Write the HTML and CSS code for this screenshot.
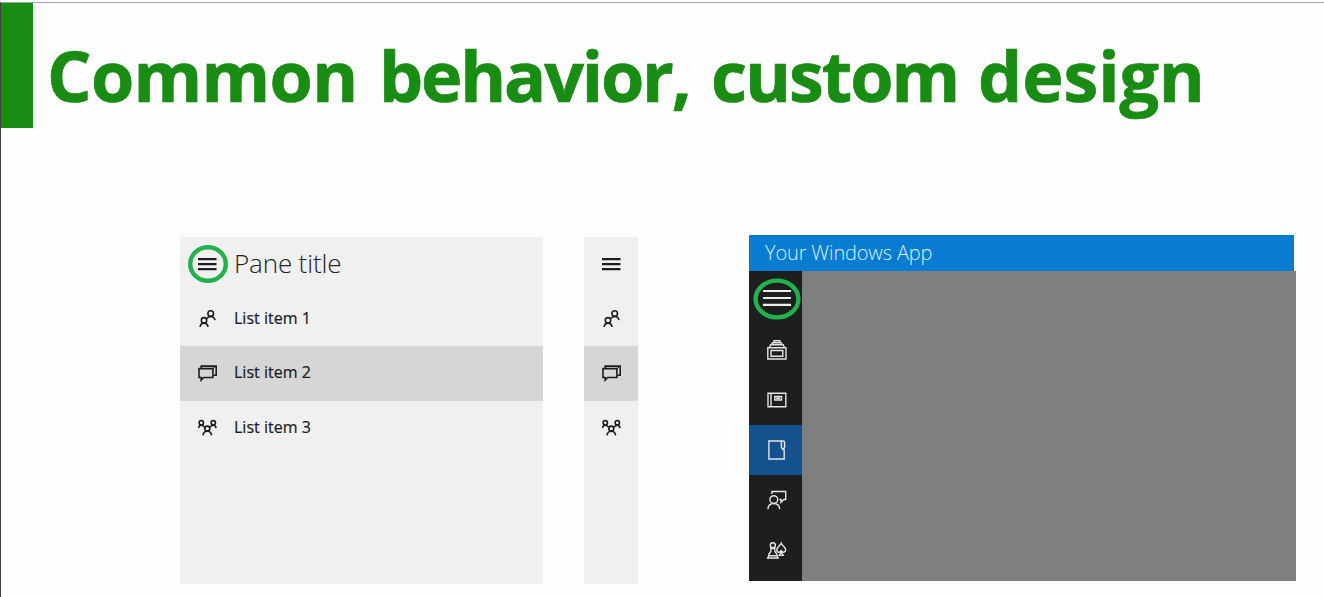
FILE: index.html
```html
<!DOCTYPE html>
<html lang="en">
<head>
<meta charset="utf-8">
<title>Common behavior, custom design</title>
<link rel="stylesheet" href="styles.css">
</head>
<body>
<svg class="defs" width="0" height="0" aria-hidden="true">
  <symbol id="menu" viewBox="0 0 20 20"><path d="M0 5.2H18.5M0 10.2H18.5M0 15.2H18.5" stroke-width="2.2"/></symbol>
  <symbol id="people" viewBox="0 0 20 20">
    <circle cx="12.7" cy="4.6" r="2.8"/><circle cx="6" cy="11.3" r="2.7"/>
    <path d="M2.1 18C2.4 15.4 4 14.1 6 14.1S9.7 15.4 10 18M8.7 9.6C9.5 8.2 11 7.5 12.7 7.5C15 7.5 16.6 8.9 17 11.2"/>
  </symbol>
  <symbol id="chat" viewBox="0 0 20 20">
    <path d="M1 5.6H14.9V14.5H5.6L3.2 17.1V14.5H1Z"/><path d="M3.2 5V3.1H18.2V12.2H15.4"/><path d="M14.9 5.6L18.2 3.1" stroke-width="1"/>
  </symbol>
  <symbol id="group" viewBox="0 0 20 20">
    <circle cx="3.3" cy="4.8" r="2.2"/><circle cx="15.3" cy="4.8" r="2.2"/><circle cx="9.3" cy="10.6" r="2.5"/>
    <path d="M.5 10.1C.7 8.4 1.6 7.2 3.3 7.2C4.8 7.2 6 8 6.7 9.3M18.1 10.1C17.9 8.4 17 7.2 15.3 7.2C13.8 7.2 12.6 8 11.9 9.3M5 17.4C5.3 14.7 7.1 13.3 9.3 13.3S13.3 14.7 13.6 17.4"/>
  </symbol>
</svg>
<main class="slide">
  <header class="heading">
    <div class="accent"></div>
    <h1 class="title"><span class="w1">Common</span> <span class="w2">behavior,</span> <span class="w3">custom</span> <span class="w4">design</span></h1>
  </header>
  <div class="demos">
    <section class="pane">
      <div class="row"><span class="cell"><svg class="icon"><use href="#menu"/></svg><svg class="ring" width="40" height="38"><ellipse cx="20" cy="19" rx="17.8" ry="16.8"/></svg></span><span class="pane-title">Pane title</span></div>
      <div class="row"><span class="cell"><svg class="icon"><use href="#people"/></svg></span><span class="label">List item 1</span></div>
      <div class="row selected"><span class="cell"><svg class="icon"><use href="#chat"/></svg></span><span class="label">List item 2</span></div>
      <div class="row"><span class="cell"><svg class="icon"><use href="#group"/></svg></span><span class="label">List item 3</span></div>
    </section>
    <section class="pane compact">
      <div class="row"><span class="cell"><svg class="icon"><use href="#menu"/></svg></span></div>
      <div class="row"><span class="cell"><svg class="icon"><use href="#people"/></svg></span></div>
      <div class="row selected"><span class="cell"><svg class="icon"><use href="#chat"/></svg></span></div>
      <div class="row"><span class="cell"><svg class="icon"><use href="#group"/></svg></span></div>
    </section>
    <section class="app">
      <div class="app-bar"><span class="app-name">Your Windows App</span></div>
      <div class="app-body">
        <nav class="rail">
          <div class="nav first"><svg class="burger" width="28" height="20"><path d="M0 3H28M0 10H28M0 16.8H28"/></svg><svg class="ring app-ring" width="48" height="42"><ellipse cx="24" cy="21" rx="21.4" ry="18.4"/></svg></div>
          <div class="nav"><svg class="glyph" viewBox="0 0 22 22"><path d="M1.8 8.8H20V20H1.8ZM5 11.5H16.8V17.2H5ZM3.4 8.5L4.6 5.8H17.2L18.4 8.5M5.7 5.4L6.6 3.8H15.2L16.1 5.4M8 3.2V1.8H13.8V3.2"/></svg></div>
          <div class="nav"><svg class="glyph" viewBox="0 0 22 22"><path d="M2 4.3H19.8V17.8H2ZM5 4.3V17.8M8.8 7.5H15.5V11H8.8ZM10.3 9.2H14"/></svg></div>
          <div class="nav current"><svg class="glyph" viewBox="0 0 22 22"><path d="M15.4 2H2.9V20H18.2V10.2M15.4 2H17.2C18.2 2 18.6 2.6 18.6 3.5V8.4L17 10.4L15.4 8.4Z"/></svg></div>
          <div class="nav"><svg class="glyph" viewBox="0 0 22 22"><circle cx="7.8" cy="10.6" r="3.9"/><path d="M1.9 20.2C2.2 16.6 4.3 14.5 7.8 14.5S13.4 16.6 13.7 20.2M5.9 5V2.5H19.7V10.5H17.8L15 13.3V10.5H13.3"/></svg></div>
          <div class="nav"><svg class="glyph" viewBox="0 0 22 22"><circle cx="6.8" cy="6.2" r="2.5"/><path d="M4 9.3H9.6M5.4 9.3C5.3 12.5 4.4 14 2.8 15.4V16.8H11V15.4C9.3 14 8.4 12.5 8.3 9.3M2.8 16.8L1.6 19H12.2L11 16.8M15.2 4.2C14.3 6.4 10.7 8 10.7 11C10.7 13.1 13.2 13.9 14.6 12.3V14L13.2 16.4H17.2L15.8 14V12.3C17.2 13.9 19.7 13.1 19.7 11C19.7 8 16.1 6.4 15.2 4.2Z"/></svg></div>
        </nav>
        <div class="content"></div>
      </div>
    </section>
  </div>
</main>
</body>
</html>
```
FILE: styles.css
```css
* { box-sizing: border-box; }
body { margin: 0; padding-top: 2px; background: #fff; font-family: "Open Sans", "Noto Sans", sans-serif; }
.defs { display: block; height: 0; }
.slide { width: 1324px; height: 595px; overflow: hidden; background: #fdfdfd; border-top: 1px solid #a5a5a5; border-left: 1px solid #404040; }
.heading { display: flex; height: 125px; }
.accent { width: 32px; height: 125px; background: #198c13; }
.title { display: flex; margin: 22px 0 0 14px; color: #198c13; font-size: 70px; line-height: 100px; font-weight: 700; white-space: nowrap; -webkit-text-stroke: .7px #198c13; }
.title span { flex: none; }
.w1 { width: 332px; letter-spacing: -.7px; }
.w2 { width: 332px; letter-spacing: -2.2px; }
.w3 { width: 267px; letter-spacing: -2px; }
.w4 { letter-spacing: -.1px; }
.demos { display: flex; padding: 107px 0 0 179px; }
.pane { width: 363px; height: 347px; margin-top: 2px; background: #f0f0f0; }
.compact { width: 54px; margin-left: 41px; }
.row { display: flex; align-items: center; height: 54.5px; }
.selected { background: #d6d6d6; }
.cell { position: relative; flex: none; display: flex; width: 54px; padding-left: 18px; }
.icon { width: 20px; height: 20px; fill: none; stroke: #1d1d1d; stroke-width: 1.6; }
.ring { position: absolute; left: 8px; top: -9px; fill: none; stroke: #22b14c; stroke-width: 4.4; }
.pane-title { padding-bottom: 2px; color: #222; font-size: 26px; font-weight: 350; letter-spacing: -.15px; white-space: nowrap; }
.label { padding-bottom: 2px; color: #1c1c1c; font-size: 16px; white-space: nowrap; letter-spacing: .02px; -webkit-text-stroke: .2px #1c1c1c; }
.app { width: 547px; margin-left: 111px; }
.app-bar { width: 545px; height: 36px; padding-left: 16px; background: #087cd1; }
.app-name { color: #dcefff; font-size: 20px; line-height: 36px; font-weight: 300; letter-spacing: -.15px; white-space: nowrap; }
.app-body { display: flex; height: 310px; }
.rail { width: 53px; background: #1d1e1e; }
.nav { position: relative; display: flex; height: 50px; padding: 14px 0 0 17px; }
.first { height: 54px; padding: 17px 0 0 14px; }
.current { background: #13528f; }
.glyph { width: 22px; height: 22px; fill: none; stroke: #e4e4e4; stroke-width: 1.4; }
.burger { fill: none; stroke: #eee; stroke-width: 2.2; }
.app-ring { left: 3.5px; top: 6.5px; }
.content { flex: 1; background: #7f7f7f; }
```
